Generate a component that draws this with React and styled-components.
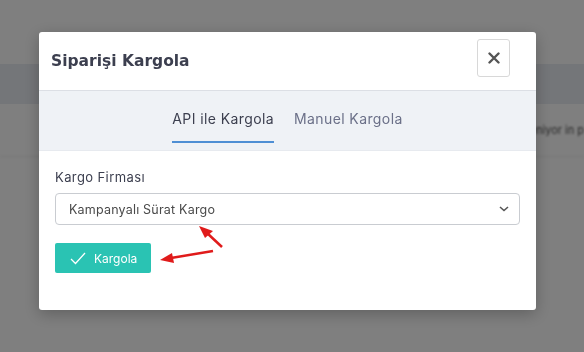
import React from "react";
import styled, { createGlobalStyle } from "styled-components";

const Global = createGlobalStyle`
  html, body {
    margin: 0;
    padding: 0;
    width: 584px;
    height: 352px;
    overflow: hidden;
    background: #ffffff;
    font-family: Inter, "Noto Sans", "Liberation Sans", sans-serif;
  }
`;

const Page = styled.div`
  width: 584px;
  height: 352px;
  display: flex;
  flex-direction: column;
  background: #fefefe;
`;

const TopSpace = styled.div`
  height: 64px;
`;

const Band = styled.div`
  height: 40px;
  background: #e9ecf2;
`;

const ListRow = styled.div`
  height: 52px;
  display: flex;
  justify-content: flex-end;
  align-items: center;
  border-bottom: 1px solid #f1f1f1;
  color: #555;
  font-size: 11px;
  filter: blur(1px);
  white-space: nowrap;
  overflow: hidden;
`;

const Overlay = styled.div`
  position: fixed;
  inset: 0;
  background: rgba(0, 0, 0, 0.5);
`;

const Modal = styled.div`
  position: fixed;
  top: 32px;
  left: 39px;
  width: 497px;
  background: #fff;
  border-radius: 3px;
  box-shadow: 0 4px 16px rgba(0, 0, 0, 0.25);
`;

const Header = styled.div`
  height: 58px;
  display: flex;
  justify-content: space-between;
  align-items: flex-start;
  padding: 0 26px 0 12px;
  border-bottom: 1px solid #dcdfe5;
`;

const Title = styled.h2`
  margin: 0;
  padding-top: 18px;
  font-family: "DejaVu Sans", Inter, sans-serif;
  font-size: 15.5px;
  line-height: 22px;
  font-weight: 700;
  color: #3c3f4f;
`;

const CloseButton = styled.button`
  margin-top: 7px;
  width: 33px;
  height: 38px;
  padding: 0;
  background: #fff;
  border: 1px solid #d8d8d8;
  border-radius: 3px;
  display: flex;
  align-items: center;
  justify-content: center;
`;

const Tabs = styled.div`
  background: #eff2f6;
  display: flex;
  justify-content: center;
  gap: 20px;
  padding: 18px 0 7px;
  border-bottom: 1px solid #e7eaef;
`;

const Tab = styled.div`
  font-size: 14px;
  line-height: 20px;
  padding: 0 0 12px;
  color: ${(p) => (p.$active ? "#3c3f4f" : "#6b7088")};
  border-bottom: 2px solid ${(p) => (p.$active ? "#4f8fd4" : "transparent")};
  letter-spacing: 0.4px;
`;

const Body = styled.div`
  position: relative;
  padding: 16px 16px 37px;
  display: flex;
  flex-direction: column;
`;

const Label = styled.label`
  font-size: 13px;
  line-height: 20px;
  color: #3c3f4f;
  letter-spacing: 0.4px;
`;

const Select = styled.div`
  margin-top: 6px;
  height: 32px;
  box-sizing: border-box;
  border: 1px solid #c9ccd1;
  border-radius: 4px;
  display: flex;
  align-items: center;
  justify-content: space-between;
  padding: 0 10px 0 13px;
  font-size: 12.5px;
  letter-spacing: 0.2px;
  color: #4a4a4a;
`;

const SubmitButton = styled.button`
  margin-top: 18px;
  align-self: flex-start;
  width: 96px;
  height: 30px;
  border: none;
  border-radius: 2px;
  background: #2ac3b3;
  color: #fff;
  font-family: inherit;
  font-size: 12px;
  display: flex;
  align-items: center;
  gap: 8px;
  padding: 0 0 0 15px;
`;

const Arrows = styled.svg`
  position: absolute;
  left: 0;
  top: 0;
  pointer-events: none;
`;

export default function App() {
  return (
    <>
      <Global />
      <Page>
        <TopSpace />
        <Band />
        <ListRow>
          <span>ödeme bekleniyor in p</span>
        </ListRow>
      </Page>
      <Overlay />
      <Modal>
        <Header>
          <Title>Siparişi Kargola</Title>
          <CloseButton aria-label="Kapat">
            <svg width="12" height="12" viewBox="0 0 12 12">
              <path d="M1.5 1.5 L10.5 10.5 M10.5 1.5 L1.5 10.5" stroke="#555" strokeWidth="2.4" strokeLinecap="round" />
            </svg>
          </CloseButton>
        </Header>
        <Tabs>
          <Tab $active>API ile Kargola</Tab>
          <Tab>Manuel Kargola</Tab>
        </Tabs>
        <Body>
          <Label>Kargo Firması</Label>
          <Select>
            <span>Kampanyalı Sürat Kargo</span>
            <svg width="10" height="6" viewBox="0 0 10 6">
              <path d="M1 1 L5 4.5 L9 1" fill="none" stroke="#555" strokeWidth="1.6" />
            </svg>
          </Select>
          <SubmitButton>
            <svg width="16" height="13" viewBox="0 0 16 13">
              <path d="M1 7 L5.5 11.5 L15 1" fill="none" stroke="#fff" strokeWidth="1.3" />
            </svg>
            Kargola
          </SubmitButton>
          <Arrows width="497" height="160" viewBox="0 0 497 160">
            <line x1="183" y1="96" x2="168" y2="82" stroke="#e01b1b" strokeWidth="2.5" />
            <polygon points="160,75 174,80 166,87" fill="#e01b1b" />
            <line x1="174" y1="100" x2="132" y2="107" stroke="#e01b1b" strokeWidth="2.5" />
            <polygon points="121,109 133,102 135,112" fill="#e01b1b" />
          </Arrows>
        </Body>
      </Modal>
    </>
  );
}
